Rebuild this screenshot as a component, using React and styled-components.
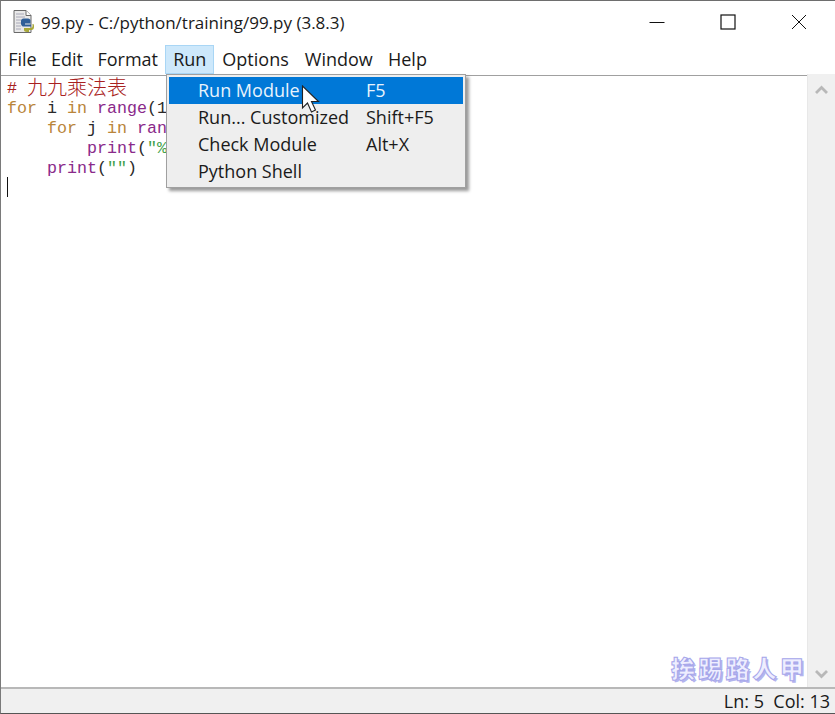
import React from 'react';
import styled, { createGlobalStyle } from 'styled-components';

const UI = `"Open Sans", "Noto Sans", sans-serif`;

const Global = createGlobalStyle`
  html, body { margin: 0; padding: 0; background: #fff; font-family: ${UI}; }
  #root { width: 835px; height: 714px; }
`;

const Window = styled.div`
  position: relative;
  width: 835px;
  height: 714px;
  box-sizing: border-box;
  border-top: 1px solid #6e6e6e;
  border-left: 1px solid #7a7a7a;
  border-bottom: 1px solid #555;
  background: #fff;
  display: flex;
  flex-direction: column;
  overflow: hidden;
  color: #1a1a1a;
`;

const TitleBar = styled.div`
  height: 44px;
  box-sizing: border-box;
  padding: 0 1px 2px 11px;
  flex: none;
  display: flex;
  align-items: center;
`;

const TitleText = styled.div`
  margin-left: 5px;
  font-size: 17px;
  white-space: nowrap;
  flex: 1;
`;

const WinButton = styled.div`
  width: 71px;
  height: 42px;
  display: flex;
  align-items: center;
  justify-content: center;
`;

const MenuBar = styled.div`
  height: 30px;
  flex: none;
  display: flex;
  align-items: stretch;
`;

const MenuItem = styled.div`
  box-sizing: border-box;
  padding: 0 ${p => (p.$wide ? '7px' : '6.200px')};
  font-size: 18px;
  line-height: 27px;
  height: 29px;
  border: 1px solid ${p => (p.$active ? '#a9d6f5' : 'transparent')};
  background: ${p => (p.$active ? '#cde8fb' : 'transparent')};
`;

const Body = styled.div`
  flex: 1;
  min-height: 0;
  display: flex;
  margin-top: -1px;
`;

const Editor = styled.div`
  flex: 1;
  position: relative;
  overflow: hidden;
  padding: 3px 0 0 6px;
  border-top: 1px solid #a0a0a0;
  margin-top: 1px;
`;

const CodeLine = styled.div`
  height: 20px;
  font-family: "Liberation Mono", "Noto Sans CJK TC", monospace;
  font-size: 16.67px;
  line-height: 19px;
  white-space: pre;
  color: #2a2a2a;
`;

const Keyword = styled.span` color: #b9853a; `;
const Builtin = styled.span` color: #8a2a8a; `;
const Str = styled.span` color: #3f9f4a; `;
const Comment = styled.span` color: #a82020; `;
const Han = styled.span`
  font-family: "Noto Sans CJK TC", sans-serif;
  font-size: 20px;
  font-weight: 300;
  line-height: 0;
  vertical-align: -2px;
`;

const Caret = styled.div`
  width: 1px;
  height: 20px;
  margin-top: -2px;
  background: #111;
`;

const Watermark = styled.div`
  position: absolute;
  right: 0;
  bottom: 4px;
  font-family: "Noto Sans CJK TC", sans-serif;
  font-weight: 900;
  font-size: 24px;
  line-height: 30px;
  letter-spacing: 3.200px;
  color: #eeeeff;
  -webkit-text-stroke: 1px #a6a6ea;
  text-shadow: 2px 2px 0 #b4b4ee;
  white-space: nowrap;
`;

const ScrollBar = styled.div`
  width: 28px;
  flex: none;
  box-sizing: border-box;
  background: #f0f0f0;
  border-left: 1px solid #e8e8e8;
  display: flex;
  flex-direction: column;
  justify-content: space-between;
  align-items: center;
  padding: 11px 0 8px;
`;

const StatusBar = styled.div`
  height: 26px;
  flex: none;
  box-sizing: border-box;
  background: #f0f0f0;
  border-top: 2px solid #b8b8b8;
  display: flex;
  justify-content: flex-end;
  align-items: center;
  padding-right: 5px;
  font-size: 18px;
  white-space: pre;
`;

const Menu = styled.div`
  position: absolute;
  left: 166px;
  top: 74px;
  width: 300px;
  height: 114px;
  box-sizing: border-box;
  background: #eeeeee;
  border: 1px solid #a0a0a0;
  padding: 2px;
  box-shadow: 3px 3px 3px rgba(0, 0, 0, 0.4);
  z-index: 2;
`;

const Row = styled.div`
  height: 27px;
  box-sizing: border-box;
  display: flex;
  align-items: center;
  padding: 0 0 2px 29px;
  font-size: 18px;
  background: ${p => (p.$active ? '#0078d7' : 'transparent')};
  color: ${p => (p.$active ? '#e8f3fc' : '#1a1a1a')};
  white-space: nowrap;
`;

const RowLabel = styled.div` width: 168px; flex: none; `;

const Pointer = styled.svg`
  position: absolute;
  left: 301px;
  top: 85px;
  z-index: 3;
`;

function PyIcon() {
  return (
    <svg width="24" height="26" viewBox="0 0 24 26">
      <path d="M2 1.500h12l5 5v17H2z" fill="#e9e9e9" stroke="#6a6a6a" />
      <path d="M4 5h8M4 8h9M4 11h5M4 14h5M4 17h5M4 20h5" stroke="#a8a8b8" />
      <path d="M14 1.500v5h5" fill="#fff" stroke="#6a6a6a" />
      <path d="M9 15v-3c0-1.500 1-2.500 2.500-2.500H16c1.500 0 2.500 1 2.500 2v3H13v1h6v2h-7.500c-1 0-2-.5-2.500-2.500z" fill="#2f5f98" />
      <path d="M22 15v3c0 2-1 3-2.500 3H17v2h-2c-2 0-3-1-3-2v-2h7c1 0 1.500-1 1.500-2v-2H21c.500 0 1 .500 1 2z" fill="#a8a838" />
    </svg>
  );
}

function Chevron({ up }) {
  return (
    <svg width="13" height="9" viewBox="0 0 13 9">
      <path d={up ? 'M1 8l5.500-5.500L12 8' : 'M1 1l5.500 5.500L12 1'} fill="none" stroke="#b8b8b8" strokeWidth="2.800" />
    </svg>
  );
}

export default function App() {
  return (
    <>
      <Global />
      <Window>
        <TitleBar>
          <PyIcon />
          <TitleText>99.py - C:/python/training/99.py (3.8.3)</TitleText>
          <WinButton>
            <svg width="16" height="16" viewBox="0 0 16 16"><path d="M0.500 8.500h15" stroke="#111" /></svg>
          </WinButton>
          <WinButton>
            <svg width="16" height="16" viewBox="0 0 16 16"><rect x="1" y="1" width="14" height="14" fill="none" stroke="#111" strokeWidth="1.200" /></svg>
          </WinButton>
          <WinButton>
            <svg width="16" height="16" viewBox="0 0 16 16"><path d="M1 1l14 14M15 1L1 15" stroke="#111" /></svg>
          </WinButton>
        </TitleBar>
        <MenuBar>
          <MenuItem>File</MenuItem>
          <MenuItem>Edit</MenuItem>
          <MenuItem>Format</MenuItem>
          <MenuItem $active $wide>Run</MenuItem>
          <MenuItem $wide>Options</MenuItem>
          <MenuItem $wide>Window</MenuItem>
          <MenuItem>Help</MenuItem>
        </MenuBar>
        <Body>
          <Editor>
            <CodeLine><Comment># <Han>九九乘法表</Han></Comment></CodeLine>
            <CodeLine><Keyword>for</Keyword> i <Keyword>in</Keyword> <Builtin>range</Builtin>(1</CodeLine>
            <CodeLine>    <Keyword>for</Keyword> j <Keyword>in</Keyword> <Builtin>ran</Builtin></CodeLine>
            <CodeLine>        <Builtin>print</Builtin>(<Str>"%</Str></CodeLine>
            <CodeLine>    <Builtin>print</Builtin>(<Str>""</Str>)</CodeLine>
            <Caret />
            <Watermark>挨踢路人甲</Watermark>
          </Editor>
          <ScrollBar>
            <Chevron up />
            <Chevron />
          </ScrollBar>
        </Body>
        <StatusBar>Ln: 5  Col: 13</StatusBar>
      </Window>
      <Menu>
        <Row $active><RowLabel>Run Module</RowLabel>F5</Row>
        <Row><RowLabel>Run... Customized</RowLabel>Shift+F5</Row>
        <Row><RowLabel>Check Module</RowLabel>Alt+X</Row>
        <Row><RowLabel>Python Shell</RowLabel></Row>
      </Menu>
      <Pointer width="20" height="29" viewBox="0 0 20 29">
        <path d="M1.500 1v22l5-5 4 9 4-2-4-8.500h7z" fill="#fff" stroke="#222" strokeWidth="1.100" />
      </Pointer>
    </>
  );
}
